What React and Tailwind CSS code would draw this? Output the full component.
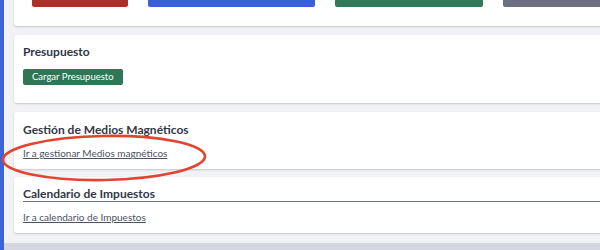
import React from 'react';

const Card = ({ children, className = '' }) => (
  <div className={`bg-white rounded-[3px] shadow-[0_1px_2px_rgba(0,0,0,0.18)] ${className}`}>
    {children}
  </div>
);

const App = () => {
  return (
    <div
      className="relative flex w-[600px] h-[250px] overflow-hidden bg-[#f1f2f5]"
      style={{ fontFamily: 'Lato, "Open Sans", sans-serif' }}
    >
      {/* side bar edge */}
      <div className="w-[4px] shrink-0 bg-[#3c64d8]" />

      <div className="flex flex-col pl-[10px] w-[640px] shrink-0">
        {/* action buttons */}
        <Card className="-mt-[40px] pt-[16px] pb-[19px] pl-[18px]">
          <div className="flex gap-[20px]">
            <button className="w-[96px] h-[31px] rounded-[2px] bg-[#ad2f28]" />
            <button className="w-[167px] h-[31px] rounded-[2px] bg-[#3a5fdd]" />
            <button className="w-[148px] h-[31px] rounded-[2px] bg-[#337858]" />
            <button className="w-[120px] h-[31px] rounded-[2px] bg-[#6b6f7f]" />
          </div>
        </Card>

        {/* Presupuesto */}
        <Card className="mt-[9px] pt-[10px] pb-[18px] px-[9px]">
          <h3 className="text-[12px] leading-[14px] font-bold text-[#313747]">Presupuesto</h3>
          <button className="block mt-[10px] h-[16px] px-[9px] rounded-[2px] bg-[#2f7656] text-white text-[9.5px] leading-[16px]">
            Cargar Presupuesto
          </button>
        </Card>

        {/* Medios magneticos */}
        <Card className="mt-[9px] pt-[11px] pb-[10px] px-[9px]">
          <h3 className="text-[12px] leading-[14px] font-bold text-[#313747]">Gestión de Medios Magnéticos</h3>
          <a href="#" className="block mt-[10px] text-[10px] leading-[12px] text-[#4b5263] underline">
            Ir a gestionar Medios magnéticos
          </a>
        </Card>

        {/* Calendario */}
        <Card className="mt-[8px] pt-[10px] pb-[10px] pl-[9px]">
          <h3 className="text-[12px] leading-[14px] font-bold text-[#313747] border-b border-[#6b7080]">
            Calendario de Impuestos
          </h3>
          <a href="#" className="block mt-[9px] text-[10px] leading-[12px] text-[#4b5263] underline">
            Ir a calendario de Impuestos
          </a>
        </Card>

        {/* next section, cut off at the bottom */}
        <div className="mt-[10px] h-[30px] bg-[#d4d7dd] -ml-[10px] pl-[19px] pt-[4px] text-[11px] leading-[14px] text-[#6b7080]">
          Documentos
        </div>
      </div>

      {/* hand drawn highlight */}
      <svg className="absolute left-0 top-[134px] pointer-events-none" width="212" height="50" viewBox="0 0 212 50">
        <ellipse cx="104" cy="24" rx="101" ry="22" fill="none" stroke="#e2452f" strokeWidth="2.6" transform="rotate(-1 104 24)" />
      </svg>
    </div>
  );
};

export default App;
